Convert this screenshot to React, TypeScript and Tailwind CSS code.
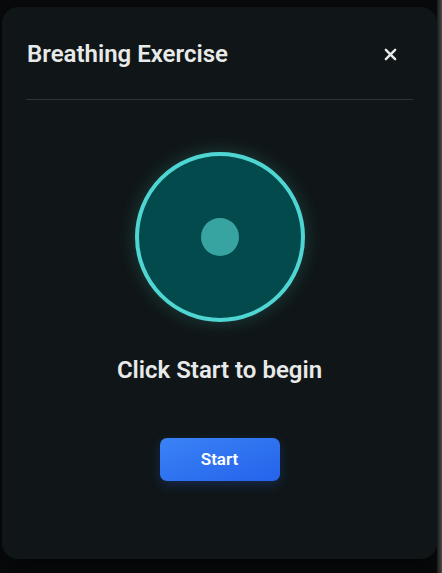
import React from 'react';

const CloseIcon: React.FC = () => (
    <svg width="13" height="13" viewBox="0 0 14 14" fill="none" stroke="currentColor" strokeWidth="2.6" strokeLinecap="round">
        <path d="M2 2 L12 12 M12 2 L2 12" />
    </svg>
);

const BreathingCircle: React.FC = () => (
    <div className="w-[170px] h-[170px] rounded-full border-[4px] border-[#4fd6d2] bg-[#034a4c] shadow-[0_0_18px_rgba(79,214,210,0.22)] flex items-center justify-center">
        <div className="w-[38px] h-[38px] rounded-full bg-[#37a4a2]" />
    </div>
);

export default function App() {
    return (
        <div className="w-[442px] h-[573px] bg-[#080a0b] flex" style={{ fontFamily: 'Roboto, "Liberation Sans", sans-serif' }}>
            <div className="ml-[2px] mt-[7px] w-[435px] h-[552px] rounded-[16px] bg-[#101617] px-6 flex flex-col shadow-[0_8px_24px_rgba(0,0,0,0.6)]">
                <div className="flex items-center justify-between pt-[32px] pb-[30px] border-b border-[#2c3436] pl-[1px] pr-[16px]">
                    <h2 className="text-[24px] leading-[30px] font-semibold text-[#e8eaea]">Breathing Exercise</h2>
                    <button className="text-[#e8eaea]"><CloseIcon /></button>
                </div>
                <div className="flex flex-col items-center pt-[52px]">
                    <BreathingCircle />
                    <p className="mt-[33px] text-[24px] leading-[30px] font-semibold text-[#e8eaea]">Click Start to begin</p>
                    <button className="mt-[53px] w-[120px] h-[43px] rounded-[7px] bg-gradient-to-br from-[#3b82f6] to-[#2563eb] text-white text-[17px] font-semibold shadow-[0_4px_12px_rgba(37,99,235,0.25)]">
                        Start
                    </button>
                </div>
            </div>
            <div className="ml-auto w-[5px] h-full bg-gradient-to-r from-[#1a1a1a] to-[#4a4a4a]" />
        </div>
    );
}
